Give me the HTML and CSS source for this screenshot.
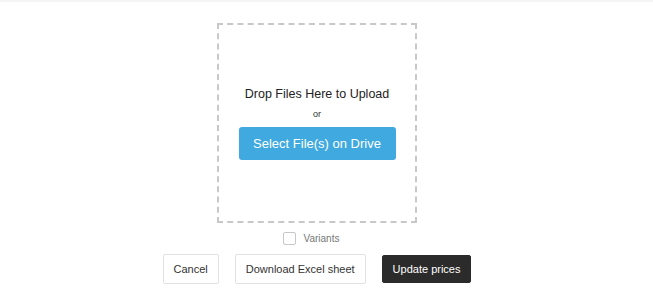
FILE: index.html
```html
<!DOCTYPE html>
<html lang="en">
<head>
    <meta charset="utf-8">
    <title>Update prices</title>
    <link rel="stylesheet" href="styles.css">
</head>
<body>
    <div class="topbar"></div>
    <div class="uploader">
        <div class="dropzone">
            <div class="drop-title">Drop Files Here to Upload</div>
            <div class="drop-or">or</div>
            <button class="select-btn">Select File(s) on Drive</button>
        </div>
        <label class="variants">
            <span class="checkbox"></span>
            <span>Variants</span>
        </label>
        <div class="actions">
            <button class="btn">Cancel</button>
            <button class="btn">Download Excel sheet</button>
            <button class="btn btn-dark">Update prices</button>
        </div>
    </div>
</body>
</html>
```

FILE: styles.css
```css
body {
    margin: 0;
    font-family: "Liberation Sans", Arial, sans-serif;
    color: #333;
    background: #fff;
}

.topbar {
    height: 2px;
    background: #f4f4f4;
}

.uploader {
    width: 634px;
    display: flex;
    flex-direction: column;
    align-items: center;
    padding-top: 21px;
}

.dropzone {
    box-sizing: border-box;
    width: 200px;
    height: 200px;
    border: 2px dashed #c8c8c8;
    display: flex;
    flex-direction: column;
    align-items: center;
    justify-content: center;
}

.drop-title {
    font-size: 12.5px;
    line-height: 16px;
    color: #222;
}

.drop-or {
    font-size: 9px;
    line-height: 12px;
    color: #333;
    margin-top: 6px;
}

.select-btn {
    margin-top: 7px;
    width: 157px;
    height: 33px;
    border: 0;
    border-radius: 3px;
    background: #3fa9e0;
    color: #fff;
    font-family: inherit;
    font-size: 13px;
}

.variants {
    display: flex;
    align-items: center;
    gap: 8px;
    margin-top: 9px;
    margin-right: 12px;
    font-size: 10px;
    color: #777;
}

.checkbox {
    box-sizing: border-box;
    width: 13px;
    height: 13px;
    border: 1px solid #c8c8c8;
    border-radius: 2px;
}

.actions {
    display: flex;
    align-items: center;
    gap: 16px;
    margin-top: 9px;
}

.btn {
    box-sizing: border-box;
    height: 30px;
    padding: 0 10px;
    border: 1px solid #e2e2e2;
    border-radius: 2px;
    background: #fff;
    color: #333;
    font-family: inherit;
    font-size: 11px;
}

.btn-dark {
    height: 28px;
    background: #2b2b2b;
    border-color: #2b2b2b;
    color: #fff;
}
```
